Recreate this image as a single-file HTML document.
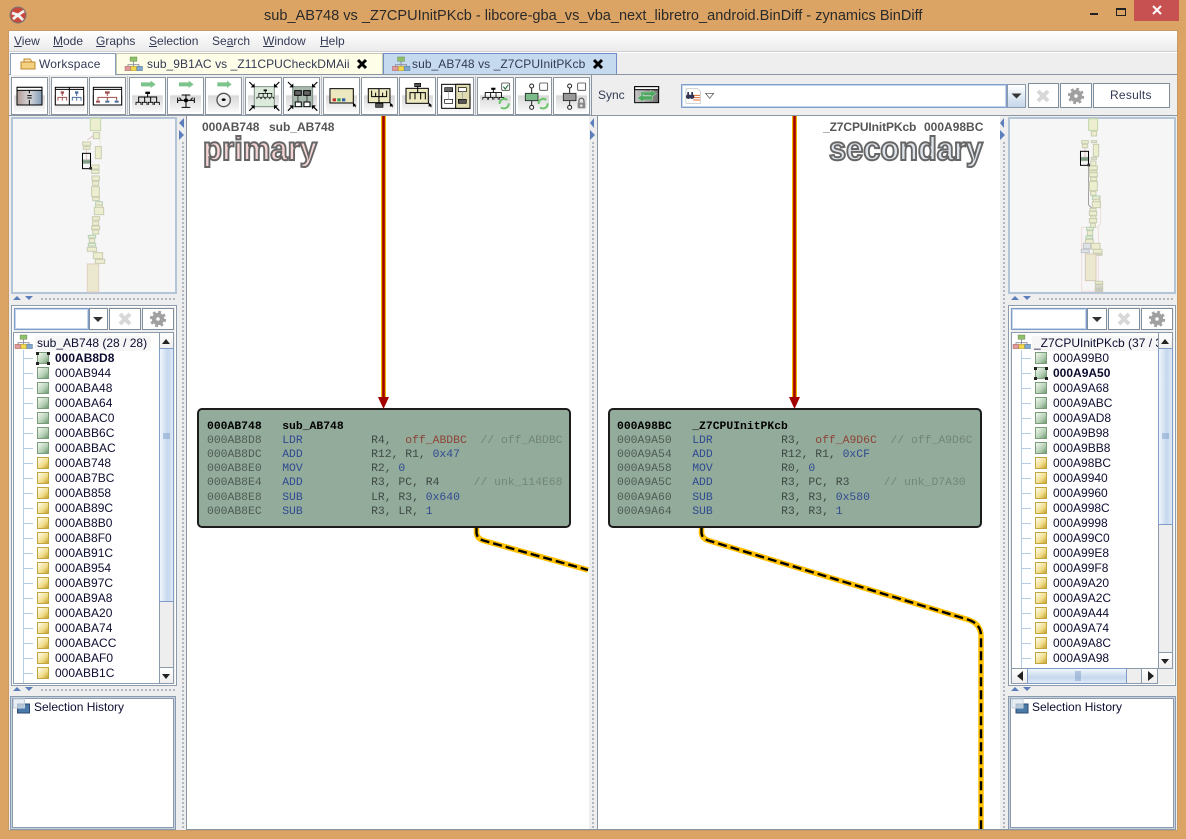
<!DOCTYPE html>
<html><head><meta charset="utf-8">
<style>
html,body{margin:0;padding:0}
body{width:1186px;height:839px;overflow:hidden;background:#dca464;position:relative;font:12px "Liberation Sans",sans-serif;color:#111}
.a{position:absolute;box-sizing:border-box}
.tx{position:absolute;white-space:pre;line-height:15px}
u{text-decoration:underline}
.menu{color:#333a55;font-size:12px;top:34px}
.btn{position:absolute;box-sizing:border-box;top:77px;width:37px;height:38px;border:1px solid #8a97a3;box-shadow:inset 0 0 0 2px #fff;background:linear-gradient(#fff 0,#fff 46%,#d9d9d9 50%,#f8f8f8 92%)}
.pb{position:absolute;box-sizing:border-box;border:1px solid #7f8e9c;background:#fff}
.panel{position:absolute;box-sizing:border-box;border:2px solid #b4c5d8;background:#f6f6f6}
.tree{position:absolute;font-size:12px;line-height:15px;color:#0c0c30;overflow:hidden}
.tree div{height:15px;padding-left:32px;position:relative;white-space:pre}
.tree div:before{content:"";position:absolute;left:14px;top:1px;width:10px;height:10px;border:1px solid #c0a63c;background:linear-gradient(135deg,#fffdf0,#f0dc88 60%,#c4a230)}
.tree div.g:before{border-color:#7a9c7a;background:linear-gradient(135deg,#f2f8f0,#b4cfb4 60%,#6e9a70)}
.tree div.s{font-weight:bold}
.tree div:after{content:"";position:absolute;left:0;top:7px;width:10px;border-top:1px solid #b5cde4}
.vl{position:absolute;width:1px;background:#b5cde4}
.sb{position:absolute;box-sizing:border-box;border:1px solid #8c9bab;background:#eee}
.th{position:absolute;box-sizing:border-box;border:1px solid #7f9dc8;background:linear-gradient(90deg,#f0f5fb,#c5d8ee 60%,#dfe9f5)}
.code{position:absolute;font:11.4px/14.2px "Liberation Mono",monospace;color:#3f4a45;white-space:pre;filter:blur(.3px)}
.code b{color:#000}.code i{font-style:normal;color:#2f4a90}.code em{font-style:normal;color:#8c4436}.code s{text-decoration:none;color:#4f5c55}.code q{quotes:none;color:#72867a}
.blk{position:absolute;box-sizing:border-box;background:#93ab9b;border:2px solid #1c1c1c;border-radius:5px;height:120px;top:408px}
.hd{position:absolute;font:bold 12px "Liberation Sans",sans-serif;color:#555;white-space:pre}
.dots{position:absolute;background-image:radial-gradient(circle at 2px 2px,#a3abb4 0.9px,transparent 1.1px);background-size:4px 4px}
</style></head><body>

<!-- window interior -->
<div class="a" style="left:8px;top:30px;width:1170px;height:801px;background:#eee;border:1px solid #c89a66"></div>
<div class="a" style="left:9px;top:31px;width:1168px;height:20px;background:linear-gradient(#fff,#ebebeb)"></div>
<div class="a" style="left:9px;top:51px;width:1168px;height:1px;background:#d0d0d0"></div>
<div class="a" style="left:9px;top:52px;width:1168px;height:1px;background:#fff"></div>

<!-- title -->
<div class="tx" style="left:264px;top:7px;font-size:14.55px;line-height:18px;color:#2a2a2a">sub_AB748 vs _Z7CPUInitPKcb - libcore-gba_vs_vba_next_libretro_android.BinDiff - zynamics BinDiff</div>
<div class="a" style="left:1134px;top:0;width:45px;height:21px;background:#c75050"></div>

<!-- menu -->
<div class="tx menu" style="left:14px"><u>V</u>iew</div>
<div class="tx menu" style="left:53px"><u>M</u>ode</div>
<div class="tx menu" style="left:96px"><u>G</u>raphs</div>
<div class="tx menu" style="left:149px"><u>S</u>election</div>
<div class="tx menu" style="left:212px">Se<u>a</u>rch</div>
<div class="tx menu" style="left:263px"><u>W</u>indow</div>
<div class="tx menu" style="left:320px"><u>H</u>elp</div>

<!-- tabs -->
<div class="a" style="left:9px;top:74px;width:1168px;height:1px;background:#8a97a3"></div>
<div class="a" style="left:10px;top:53px;width:106px;height:22px;background:#fff;border:1px solid #8aa0bc;border-bottom:0"></div>
<div class="a" style="left:116px;top:53px;width:267px;height:21px;background:#fdfde8;border:1px solid #c8c8b0;border-bottom:0"></div>
<div class="a" style="left:383px;top:53px;width:234px;height:21px;background:#c5d9ef;border:1px solid #6f8dc4;border-bottom:0"></div>
<div class="tx" style="left:39px;top:57px;color:#333a55;letter-spacing:.2px">Workspace</div>
<div class="tx" style="left:147px;top:57px;color:#333a55;letter-spacing:.07px">sub_9B1AC vs _Z11CPUCheckDMAii</div>
<div class="tx" style="left:412px;top:57px;color:#333a55;letter-spacing:.07px">sub_AB748 vs _Z7CPUInitPKcb</div>

<!-- toolbar buttons -->
<div class="btn" style="left:11px"></div><div class="btn" style="left:51px"></div><div class="btn" style="left:89px"></div>
<div class="btn" style="left:129px"></div><div class="btn" style="left:167px"></div><div class="btn" style="left:205px"></div>
<div class="btn" style="left:245px"></div><div class="btn" style="left:283px"></div>
<div class="btn" style="left:323px"></div><div class="btn" style="left:361px"></div><div class="btn" style="left:399px"></div><div class="btn" style="left:437px"></div>
<div class="btn" style="left:477px"></div><div class="btn" style="left:515px"></div><div class="btn" style="left:553px"></div>
<div class="a" style="left:49px;top:76px;width:1px;height:39px;background:#b8bec4"></div>
<div class="a" style="left:127px;top:76px;width:1px;height:39px;background:#b8bec4"></div>
<div class="a" style="left:243px;top:76px;width:1px;height:39px;background:#b8bec4"></div>
<div class="a" style="left:321px;top:76px;width:1px;height:39px;background:#b8bec4"></div>
<div class="a" style="left:475px;top:76px;width:1px;height:39px;background:#b8bec4"></div>
<div class="a" style="left:591px;top:75px;width:1px;height:40px;background:#8a97a3"></div>
<div class="tx" style="left:598px;top:88px;color:#333a55">Sync</div>

<!-- search row -->
<div class="a" style="left:681px;top:84px;width:326px;height:24px;background:#fff;border:1px solid #7f9dc8;box-shadow:inset 0 0 0 1px #c4d6ea"></div>
<div class="a" style="left:1007px;top:84px;width:19px;height:24px;background:linear-gradient(#fff,#c4d6ea);border:1px solid #8c9bab"></div>
<div class="pb" style="left:1028px;top:83px;width:31px;height:25px"></div>
<div class="pb" style="left:1060px;top:83px;width:32px;height:25px"></div>
<div class="pb" style="left:1093px;top:83px;width:77px;height:25px"></div>
<div class="tx" style="left:1110px;top:88px;color:#333a55;letter-spacing:.25px">Results</div>
<div class="a" style="left:9px;top:115px;width:1168px;height:1px;background:#8a97a3"></div>

<!-- graph areas -->
<div class="a" style="left:177px;top:116px;width:10px;height:714px;background:#eee"></div>
<div class="dots" style="left:181px;top:141px;width:4px;height:688px"></div>
<div class="a" style="left:186px;top:116px;width:1px;height:714px;background:#8a97a3"></div>
<div class="a" style="left:187px;top:116px;width:402px;height:714px;background:#fff"></div>
<div class="a" style="left:589px;top:116px;width:8px;height:714px;background:#eee"></div>
<div class="dots" style="left:591px;top:141px;width:4px;height:688px"></div>
<div class="a" style="left:597px;top:116px;width:1px;height:714px;background:#8a97a3"></div>
<div class="a" style="left:598px;top:116px;width:402px;height:714px;background:#fff"></div>
<div class="a" style="left:1000px;top:116px;width:8px;height:714px;background:#eee"></div>
<div class="dots" style="left:1002px;top:141px;width:4px;height:688px"></div>
<div class="a" style="left:187px;top:829px;width:821px;height:1px;background:#8a97a3"></div>

<div class="hd" style="left:202px;top:120px">000AB748</div>
<div class="hd" style="left:269px;top:120px">sub_AB748</div>
<div class="hd" style="left:823px;top:120px;letter-spacing:-.1px">_Z7CPUInitPKcb</div>
<div class="hd" style="left:924px;top:120px">000A98BC</div>

<!-- left panels -->
<div class="panel" style="left:11px;top:117px;width:166px;height:177px"></div>
<div class="dots" style="left:40px;top:297px;width:136px;height:4px"></div>
<div class="a" style="left:11px;top:305px;width:166px;height:381px;border:1px solid #8c9bab;background:#eee;box-shadow:inset 0 0 0 1px #fff"></div>
<div class="a" style="left:14px;top:308px;width:75px;height:22px;background:#fff;border:1px solid #7f9dc8;box-shadow:inset 0 0 0 1px #c4d6ea"></div>
<div class="pb" style="left:89px;top:308px;width:19px;height:22px"></div>
<div class="pb" style="left:109px;top:308px;width:32px;height:22px"></div>
<div class="pb" style="left:142px;top:308px;width:32px;height:22px"></div>
<div class="a" style="left:13px;top:332px;width:146px;height:352px;background:#fff;border:1px solid #8c9bab;border-right:0"></div>
<div class="sb" style="left:159px;top:332px;width:15px;height:352px"></div>
<div class="sb" style="left:159px;top:332px;width:15px;height:17px;background:linear-gradient(#fff,#eee)"></div>
<div class="th" style="left:159px;top:348px;width:15px;height:254px"></div>
<div class="sb" style="left:159px;top:667px;width:15px;height:17px;background:linear-gradient(#fff,#eee)"></div>
<div class="a" style="left:35px;top:336px;width:116px;height:15px;background:#f6f6f6"></div>
<div class="tx" style="left:37px;top:336px;color:#0c0c30">sub_AB748 (28 / 28)</div>
<div class="vl" style="left:23px;top:350px;height:333px"></div>
<div class="tree" style="left:23px;top:351px;width:135px;height:332px">
<div class="g s">000AB8D8</div><div class="g">000AB944</div><div class="g">000ABA48</div><div class="g">000ABA64</div><div class="g">000ABAC0</div><div class="g">000ABB6C</div><div class="g">000ABBAC</div><div>000AB748</div><div>000AB7BC</div><div>000AB858</div><div>000AB89C</div><div>000AB8B0</div><div>000AB8F0</div><div>000AB91C</div><div>000AB954</div><div>000AB97C</div><div>000AB9A8</div><div>000ABA20</div><div>000ABA74</div><div>000ABACC</div><div>000ABAF0</div><div>000ABB1C</div>
</div>
<div class="dots" style="left:40px;top:688px;width:136px;height:4px"></div>
<div class="a" style="left:10px;top:696px;width:166px;height:134px;background:#fff;border:1px solid #8c9bab;box-shadow:inset 0 0 0 1px #c4d3e4,inset 0 0 0 2px #8c9bab"></div>
<div class="tx" style="left:34px;top:700px;color:#0c0c30">Selection History</div>

<!-- right panels -->
<div class="panel" style="left:1008px;top:117px;width:168px;height:177px"></div>
<div class="dots" style="left:1038px;top:297px;width:136px;height:4px"></div>
<div class="a" style="left:1008px;top:305px;width:168px;height:381px;border:1px solid #8c9bab;background:#eee;box-shadow:inset 0 0 0 1px #fff"></div>
<div class="a" style="left:1011px;top:308px;width:76px;height:22px;background:#fff;border:1px solid #7f9dc8;box-shadow:inset 0 0 0 1px #c4d6ea"></div>
<div class="pb" style="left:1087px;top:308px;width:20px;height:22px"></div>
<div class="pb" style="left:1108px;top:308px;width:32px;height:22px"></div>
<div class="pb" style="left:1141px;top:308px;width:32px;height:22px"></div>
<div class="a" style="left:1011px;top:332px;width:147px;height:337px;background:#fff;border:1px solid #8c9bab;border-right:0;border-bottom:0"></div>
<div class="vl" style="left:1021px;top:350px;height:318px"></div>
<div class="tree" style="left:1021px;top:351px;width:137px;height:317px">
<div class="g">000A99B0</div><div class="g s">000A9A50</div><div class="g">000A9A68</div><div class="g">000A9ABC</div><div class="g">000A9AD8</div><div class="g">000A9B98</div><div class="g">000A9BB8</div><div>000A98BC</div><div>000A9940</div><div>000A9960</div><div>000A998C</div><div>000A9998</div><div>000A99C0</div><div>000A99E8</div><div>000A99F8</div><div>000A9A20</div><div>000A9A2C</div><div>000A9A44</div><div>000A9A74</div><div>000A9A8C</div><div>000A9A98</div>
</div>
<div class="a" style="left:1032px;top:336px;width:126px;height:15px;background:#f6f6f6"></div>
<div class="tx" style="left:1034px;top:336px;width:124px;overflow:hidden;color:#0c0c30">_Z7CPUInitPKcb (37 / 37)</div>
<div class="sb" style="left:1158px;top:332px;width:15px;height:337px"></div>
<div class="sb" style="left:1158px;top:332px;width:15px;height:17px;background:linear-gradient(#fff,#eee)"></div>
<div class="th" style="left:1158px;top:348px;width:15px;height:177px"></div>
<div class="sb" style="left:1158px;top:652px;width:15px;height:17px;background:linear-gradient(#fff,#eee)"></div>
<div class="sb" style="left:1011px;top:668px;width:147px;height:16px"></div>
<div class="sb" style="left:1011px;top:668px;width:17px;height:16px;background:linear-gradient(#fff,#eee)"></div>
<div class="th" style="left:1027px;top:668px;width:100px;height:16px;background:linear-gradient(#f0f5fb,#c5d8ee 60%,#dfe9f5)"></div>
<div class="sb" style="left:1141px;top:668px;width:17px;height:16px;background:linear-gradient(#fff,#eee)"></div>
<div class="a" style="left:1008px;top:696px;width:168px;height:134px;background:#fff;border:1px solid #8c9bab;box-shadow:inset 0 0 0 1px #c4d3e4,inset 0 0 0 2px #8c9bab"></div>
<div class="tx" style="left:1032px;top:700px;color:#0c0c30">Selection History</div>

<!-- code blocks -->
<div class="blk" style="left:197px;width:374px"></div>
<div class="blk" style="left:608px;width:374px"></div>
<div class="code" style="left:207px;top:419.500px"><b>000AB748   sub_AB748</b>
<s>000AB8D8</s>   <i>LDR</i>          R4,  <em>off_ABDBC</em>  <q>// off_ABDBC</q>
<s>000AB8DC</s>   <i>ADD</i>          R12, R1, <i>0x47</i>
<s>000AB8E0</s>   <i>MOV</i>          R2, <i>0</i>
<s>000AB8E4</s>   <i>ADD</i>          R3, PC, R4     <q>// unk_114E68</q>
<s>000AB8E8</s>   <i>SUB</i>          LR, R3, <i>0x640</i>
<s>000AB8EC</s>   <i>SUB</i>          R3, LR, <i>1</i></div>
<div class="code" style="left:617px;top:419.500px"><b>000A98BC   _Z7CPUInitPKcb</b>
<s>000A9A50</s>   <i>LDR</i>          R3,  <em>off_A9D6C</em>  <q>// off_A9D6C</q>
<s>000A9A54</s>   <i>ADD</i>          R12, R1, <i>0xCF</i>
<s>000A9A58</s>   <i>MOV</i>          R0, <i>0</i>
<s>000A9A5C</s>   <i>ADD</i>          R3, PC, R3     <q>// unk_D7A30</q>
<s>000A9A60</s>   <i>SUB</i>          R3, R3, <i>0x580</i>
<s>000A9A64</s>   <i>SUB</i>          R3, R3, <i>1</i></div>

<svg class="a" style="left:0;top:0" width="1186" height="839" viewBox="0 0 1186 839" xmlns="http://www.w3.org/2000/svg">
<defs>
<linearGradient id="gw" x1="0" y1="0" x2="1" y2="0"><stop offset="0" stop-color="#b09a98"/><stop offset=".5" stop-color="#d8d8d8"/><stop offset="1" stop-color="#7f9ab5"/></linearGradient>
<linearGradient id="gs" x1="0" y1="0" x2="1" y2="0"><stop offset="0" stop-color="#c8c8c8"/><stop offset="1" stop-color="#6e6e6e"/></linearGradient>
<g id="ttree"><g transform="scale(.85)"><rect x="-4" y="0" width="8" height="5" fill="#8ec06a" stroke="#6a8a50" stroke-width=".6"/><path d="M0 5V9M-6.500 12V9H6.500V12M0 9V12" stroke="#889" stroke-width="1" fill="none"/><rect x="-10" y="11" width="6.500" height="5" fill="#e09a9a" stroke="#a66" stroke-width=".6"/><rect x="-3" y="11" width="6.500" height="5" fill="#f2d84c" stroke="#b09a30" stroke-width=".6"/><rect x="4" y="11" width="6.500" height="5" fill="#7fa8cc" stroke="#5a7a9a" stroke-width=".6"/></g></g>
<g id="x"><path d="M-4-4L4 4M4-4L-4 4" stroke="#000" stroke-width="3"/></g>
<g id="grayx"><path d="M-5-5L5 5M5-5L-5 5" stroke="#d8d8d8" stroke-width="4"/></g>
<g id="gear"><circle r="4" fill="none" stroke="#a0a0a0" stroke-width="4.500"/><circle r="7" fill="none" stroke="#a0a0a0" stroke-width="2.400" stroke-dasharray="2.800 2.700"/></g>
<path id="hs" d="M0 0L10 0L5 5Z" fill="#333"/>
<g id="stk"><rect x="5" y="7" width="12" height="9" fill="#4a7aa8" stroke="#2e4a70"/><rect x="1" y="2" width="11" height="9" fill="#dfe7f0" fill-opacity=".7" stroke="#c4d0dc"/></g>
<g id="hg" fill="none" stroke="#000" stroke-width="3"><rect x="-7" y="-2" width="14" height="7" fill="#000" stroke="none"/><path d="M0 4V14M-27 30V14H27V30M-9 14V30M9 14V30"/><path d="M-35 38V30H-20V38M-16 38V30H-2V38M2 38V30H16V38M20 38V30H35V38" stroke-width="2.500"/></g>
<g id="cur"><path d="M0 0L0 10L3 7.500L5 11L7 10L5 6.500L8.500 6.500Z" fill="#000"/></g>
<g id="inarrow"><path d="M0 0L12 12" stroke="#000" stroke-width="3.500" fill="none"/><path d="M16 16H4L16 4Z" fill="#000"/></g>
</defs>

<!-- title icon -->
<circle cx="18" cy="15" r="8" fill="#c8483c" stroke="#777" stroke-width="1"/>
<path d="M12 13L18 15L24 11M13 19L18 15L23 20" stroke="#f2f2f2" stroke-width="2.800" fill="none"/>
<!-- window controls -->
<rect x="1090" y="13" width="8" height="2" fill="#222"/>
<rect x="1116.500" y="8.500" width="9" height="7" fill="none" stroke="#222"/><rect x="1116" y="8" width="10" height="2" fill="#222"/>
<path d="M1153 6L1161 14M1161 6L1153 14" stroke="#fff" stroke-width="2"/>

<!-- tabs icons -->
<path d="M21 62H35V69H21Z" fill="#f3cf80" stroke="#c08a30"/><path d="M24 59H30L32 62H24Z" fill="#f9e3b0" stroke="#c08a30"/>
<use href="#ttree" x="133.500" y="57"/><use href="#ttree" x="401" y="57"/>
<use href="#x" x="362" y="64"/><use href="#x" x="598" y="64"/>

<!-- toolbar icons: zoom 1 coords -->
<g transform="scale(.3333)">
<rect x="51" y="262" width="75" height="53" fill="url(#gw)" stroke="#000" stroke-width="3"/><rect x="51" y="262" width="75" height="9" fill="#fff" stroke="#000" stroke-width="3"/><path d="M88 271V280M88 300V315" stroke="#000" stroke-width="3"/><path d="M82 287H95M82 294H95" stroke="#000" stroke-width="3"/>
<rect x="166" y="262" width="85" height="53" fill="#fff" stroke="#000" stroke-width="3"/><path d="M166 268H251M208 262V315" stroke="#000" stroke-width="3"/>
<path d="M187 280V288M174 302V292H200V302M187 292V302" stroke="#a05050" stroke-width="3" fill="none"/><rect x="182" y="274" width="10" height="7" fill="#a05050"/>
<path d="M230 280V288M217 302V292H243V302M230 292V302" stroke="#4a6e9c" stroke-width="3" fill="none"/><rect x="225" y="274" width="10" height="7" fill="#4a6e9c"/>
<rect x="280" y="262" width="85" height="53" fill="#fff" stroke="#000" stroke-width="3"/><path d="M280 268H365" stroke="#000" stroke-width="3"/>
<path d="M322 280V288M294 302V292H350V302M322 292V302" stroke="#a05050" stroke-width="3" fill="none"/><rect x="315" y="274" width="14" height="7" fill="#a05050"/><rect x="288" y="302" width="12" height="6" fill="#a05050"/><rect x="344" y="302" width="12" height="6" fill="#4a6e9c"/><rect x="316" y="302" width="12" height="6" fill="#4a6e9c"/>
<g fill="#7cc48c"><path d="M423 247H452V242L467 253L452 264V259H423Z"/><path d="M537 247H566V242L581 253L566 264V259H537Z"/><path d="M652 247H681V242L695 253L681 264V259H652Z"/></g>
<use href="#hg" transform="translate(443,277)"/>
<g stroke="#000" stroke-width="3" fill="none"><path d="M533 301H583M558 285V322M545 285H571M545 322H571M533 293V309M583 293V309M545 301L538 293M571 301L578 293"/></g><circle cx="558" cy="301" r="6"/>
<circle cx="671" cy="300" r="20" fill="#eee" stroke="#555" stroke-width="4"/><ellipse cx="671" cy="299" rx="6" ry="4"/>
<rect x="763" y="260" width="60" height="60" fill="#dceadc" stroke="#7f8f85" stroke-width="3"/><use href="#hg" transform="translate(796,270) scale(.72)"/>
<use href="#inarrow" transform="translate(748,246)"/><use href="#inarrow" transform="translate(838,246) scale(-1,1)"/><use href="#inarrow" transform="translate(748,332) scale(1,-1)"/><use href="#inarrow" transform="translate(838,332) scale(-1,-1)"/>
<rect x="878" y="260" width="60" height="60" fill="#a9b8ad" stroke="#7f8f85" stroke-width="3"/>
<rect x="884" y="272" width="20" height="14" fill="#666" stroke="#000" stroke-width="3"/><rect x="911" y="272" width="20" height="14" fill="#666" stroke="#000" stroke-width="3"/>
<path d="M894 286V305M921 286V305" stroke="#000" stroke-width="2"/><rect x="886" y="306" width="18" height="14" fill="#fff" stroke="#000" stroke-width="3"/><rect x="912" y="306" width="18" height="14" fill="#fff" stroke="#000" stroke-width="3"/>
<use href="#inarrow" transform="translate(864,246)"/><use href="#inarrow" transform="translate(952,246) scale(-1,1)"/><use href="#inarrow" transform="translate(864,332) scale(1,-1)"/><use href="#inarrow" transform="translate(952,332) scale(-1,-1)"/>
<rect x="990" y="266" width="70" height="43" fill="#ece8c0" stroke="#000" stroke-width="3"/><rect x="998" y="295" width="10" height="9" fill="#c03030"/><rect x="1012" y="295" width="10" height="9" fill="#30a050"/><rect x="1026" y="295" width="10" height="9" fill="#3060b0"/>
<use href="#cur" transform="translate(1059,308) scale(1.300)"/>
<rect x="1105" y="266" width="65" height="42" fill="#ece8c0" stroke="#000" stroke-width="3"/><path d="M1137 266V308M1115 272V290H1160V272M1127 278V290M1148 278V290" stroke="#000" stroke-width="3" fill="none"/><rect x="1127" y="310" width="22" height="12" fill="#555" stroke="#000" stroke-width="2"/>
<use href="#cur" transform="translate(1170,308) scale(1.300)"/>
</g>
<!-- toolbar icons: zoom 2 coords -->
<g transform="translate(400,40) scale(.3333)">
<rect x="18" y="145" width="67" height="45" fill="#ece8c0" stroke="#000" stroke-width="3"/><rect x="44" y="130" width="18" height="10" fill="#555" stroke="#000" stroke-width="2"/><path d="M53 140V158M30 178V158H76V178M45 158V178M62 158V178" stroke="#000" stroke-width="3" fill="none"/>
<use href="#cur" transform="translate(86,188) scale(1.300)"/>
<rect x="125" y="133" width="85" height="72" fill="#fff" stroke="#000" stroke-width="3"/><rect x="167" y="133" width="43" height="72" fill="#dedcb0" stroke="#000" stroke-width="3"/>
<rect x="134" y="143" width="24" height="12" fill="#666" stroke="#000" stroke-width="2"/><rect x="134" y="178" width="24" height="12" fill="#fff" stroke="#000" stroke-width="2"/><path d="M146 155V178" stroke="#999" stroke-width="2"/>
<rect x="175" y="143" width="24" height="12" fill="#fff" stroke="#000" stroke-width="2"/><rect x="175" y="178" width="24" height="12" fill="#555" stroke="#000" stroke-width="2"/><path d="M187 155V178" stroke="#999" stroke-width="2"/>
<use href="#hg" transform="translate(280,145) scale(.9)"/>
<rect x="305" y="129" width="24" height="22" rx="3" fill="#fff" stroke="#444" stroke-width="2.500"/><path d="M310 140L316 147L325 134" stroke="#2e7a4a" stroke-width="3.500" fill="none"/>
<g id="rf" fill="none" stroke="#6ac46a" stroke-width="6"><path d="M299 192A14 14 0 0 1 322 180"/><path d="M326 190A14 14 0 0 1 303 202"/></g>
<circle cx="395" cy="138" r="6" fill="#fff" stroke="#222" stroke-width="3"/><path d="M395 144V160M395 182V196" stroke="#222" stroke-width="3"/><rect x="376" y="160" width="38" height="22" fill="#7cbc8c" stroke="#222" stroke-width="2.500"/><circle cx="395" cy="202" r="6" fill="#fff" stroke="#222" stroke-width="3"/>
<rect x="419" y="129" width="24" height="22" rx="3" fill="#fff" stroke="#444" stroke-width="2.500"/>
<use href="#rf" x="117"/>
<circle cx="509" cy="138" r="6" fill="#fff" stroke="#222" stroke-width="3"/><path d="M509 144V160M509 182V196" stroke="#222" stroke-width="3"/><rect x="490" y="160" width="38" height="22" fill="#999" stroke="#222" stroke-width="2.500"/><circle cx="509" cy="202" r="6" fill="#fff" stroke="#222" stroke-width="3"/>
<rect x="533" y="129" width="24" height="22" rx="3" fill="#fff" stroke="#444" stroke-width="2.500"/>
<rect x="533" y="188" width="23" height="17" fill="#888"/><path d="M537 188V182A7 7 0 0 1 552 182V188" stroke="#444" stroke-width="3" fill="none"/><rect x="541" y="194" width="6" height="6" fill="#fff"/>
<rect x="704" y="140" width="72" height="48" fill="url(#gs)" stroke="#000" stroke-width="3"/><rect x="704" y="140" width="72" height="9" fill="#fff" stroke="#000" stroke-width="3"/>
<path d="M722 156H752V150L770 161L752 172V166H722Z" fill="#4fa860" stroke="#e8f0e8" stroke-width="1"/><path d="M758 168H730V162L712 174L730 186V180H758Z" fill="#4fa860" stroke="#e8f0e8" stroke-width="1"/>
<path d="M858 146H893L902 155V190H858Z" fill="#fff" stroke="#bbb" stroke-width="2"/><path d="M880 166H900M880 173H900M880 180H900" stroke="#e06a30" stroke-width="3"/><circle cx="865" cy="170" r="7" fill="#335"/><circle cx="876" cy="170" r="7" fill="#335"/><rect x="862" y="156" width="5" height="10" fill="#335"/><rect x="874" y="156" width="5" height="10" fill="#335"/>
<path d="M917 160H941L929 175Z" fill="#fff" stroke="#444" stroke-width="2"/>
</g>
<use href="#hs" x="1011.500" y="93.500"/>
<use href="#grayx" x="1043" y="96"/><use href="#gear" x="1076" y="96"/>

<!-- splitter arrows -->
<g fill="#5c7fbc"><path d="M184 118L179 123L184 128Z"/><path d="M179 130L184 135L179 140Z"/><path d="M594 118L590 123L594 128Z"/><path d="M590 130L595 135L590 140Z"/><path d="M1004 118L1000 123L1004 128Z"/><path d="M1000 130L1005 135L1000 140Z"/>
<path d="M13 300L21 300L17 296Z"/><path d="M25 296L33 296L29 300Z"/><path d="M13 691L21 691L17 687Z"/><path d="M25 687L33 687L29 691Z"/>
<path d="M1011 300L1019 300L1015 296Z"/><path d="M1023 296L1031 296L1027 300Z"/><path d="M1011 691L1019 691L1015 687Z"/><path d="M1023 687L1031 687L1027 691Z"/></g>

<!-- combos left/right -->
<use href="#hs" x="93" y="317"/><use href="#hs" x="1092" y="317"/>
<use href="#grayx" x="125" y="319"/><use href="#gear" x="158" y="319"/>
<use href="#grayx" x="1124" y="319"/><use href="#gear" x="1157" y="319"/>
<g fill="#222"><path d="M162 344L170 344L166 339Z"/><path d="M162 674L170 674L166 679Z"/><path d="M1161 344L1169 344L1165 339Z"/><path d="M1161 659L1169 659L1165 664Z"/><path d="M1023 671V681L1017 676Z"/><path d="M1148 671V681L1154 676Z"/></g>
<path d="M163 434H170M163 436H170M163 438H170M1162 434H1169M1162 436H1169M1162 438H1169" stroke="#7f9dc8" stroke-width="1"/>
<path d="M1076 671V681M1078 671V681M1080 671V681" stroke="#7f9dc8"/>
<use href="#ttree" x="23.500" y="335"/><use href="#ttree" x="1021.500" y="335"/>
<g fill="#222"><rect x="36" y="352" width="3" height="3"/><rect x="47" y="352" width="3" height="3"/><rect x="36" y="362" width="3" height="3"/><rect x="47" y="362" width="3" height="3"/>
<rect x="1034" y="367" width="3" height="3"/><rect x="1045" y="367" width="3" height="3"/><rect x="1034" y="377" width="3" height="3"/><rect x="1045" y="377" width="3" height="3"/></g>
<use href="#stk" x="12.500" y="697"/><use href="#stk" x="1011" y="697"/>

<!-- edges -->
<g fill="none">
<path d="M383.500 116V398" stroke="#f2b800" stroke-width="5"/><path d="M383.500 116V398" stroke="#a30000" stroke-width="2.600"/>
<path d="M794.500 116V398" stroke="#f2b800" stroke-width="5"/><path d="M794.500 116V398" stroke="#a30000" stroke-width="2.600"/>
<path d="M476.500 528V533Q477 539 485 541L588 570" stroke="#ffc000" stroke-width="5.500"/>
<path d="M476.500 528V533Q477 539 485 541L588 570" stroke="#000" stroke-width="2.400" stroke-dasharray="9 4"/>
<path d="M701.500 528V533Q702 539 710 541L966 619Q981 623 981 636V829" stroke="#ffc000" stroke-width="5.500"/>
<path d="M701.500 528V533Q702 539 710 541L966 619Q981 623 981 636V829" stroke="#000" stroke-width="2.400" stroke-dasharray="9 4"/>
</g>
<path d="M378 397H389L383.500 409Z" fill="#a30000"/><path d="M789 397H800L794.500 409Z" fill="#a30000"/>

<!-- big labels -->
<text x="203" y="160" font-family="Liberation Sans" font-weight="bold" font-size="33" textLength="114" lengthAdjust="spacingAndGlyphs" fill="#f5d5d5" stroke="#666" stroke-width="2" >primary</text>
<text x="829" y="160" font-family="Liberation Sans" font-weight="bold" font-size="33" textLength="154" lengthAdjust="spacingAndGlyphs" fill="#dfe5ec" stroke="#666" stroke-width="2">secondary</text>

<!-- left minimap -->
<g transform="translate(0,110) scale(.3333)" fill="#eceecf" stroke="#c9ccb0" stroke-width="3">
<path d="M260 100V150M290 70L262 90" stroke="#e0b0b0" stroke-width="2" fill="none"/>
<path d="M300 60V110" stroke="#e8eadb" fill="none"/>
<rect x="271" y="25" width="31" height="37" stroke="#c0d8a8"/><rect x="280" y="68" width="18" height="18"/><rect x="248" y="96" width="24" height="10"/><rect x="250" y="110" width="20" height="8"/><rect x="286" y="110" width="18" height="36"/><rect x="248" y="150" width="24" height="10" fill="#7f9c85" stroke="#9fb09f"/><rect x="275" y="165" width="22" height="12"/><rect x="275" y="180" width="22" height="10"/><rect x="276" y="198" width="22" height="14"/><rect x="278" y="214" width="18" height="12"/><rect x="275" y="230" width="23" height="30"/><rect x="278" y="262" width="20" height="10"/><rect x="287" y="275" width="20" height="10" stroke="#b0d0b8"/><rect x="287" y="285" width="20" height="8"/><rect x="283" y="292" width="28" height="22"/><rect x="277" y="320" width="22" height="10"/><rect x="278" y="334" width="18" height="12"/><rect x="275" y="348" width="24" height="10"/><rect x="278" y="360" width="18" height="12"/><rect x="265" y="376" width="22" height="8" stroke="#b0d0b8"/><rect x="268" y="386" width="16" height="12"/><rect x="265" y="400" width="22" height="8" stroke="#b0d0b8"/><rect x="262" y="412" width="28" height="12"/><rect x="280" y="428" width="28" height="18"/><rect x="286" y="448" width="28" height="12"/><rect x="262" y="462" width="34" height="84" fill="#ece8d0" stroke="#e0d0c0"/>
<rect x="247.500" y="130" width="24" height="46" fill="none" stroke="#000" stroke-width="3"/><rect x="268" y="171" width="8" height="8" fill="#333" stroke="none"/>
</g>
<!-- right minimap -->
<g transform="translate(990,110) scale(.3333)" fill="#eceecf" stroke="#c9ccb0" stroke-width="3">
<rect x="275" y="352" width="50" height="192" fill="none" stroke="#f0dcdc"/><path d="M325 258H332V340L325 350" fill="none" stroke="#f0dcdc"/>
<path d="M285 113V142" stroke="#e0b0b0" stroke-width="2" fill="none"/>
<path d="M296 165V285L308 297" stroke="#777" stroke-width="2" fill="none"/>
<rect x="296" y="26" width="27" height="35" stroke="#c0d8a8"/><rect x="304" y="64" width="16" height="14"/><rect x="275" y="92" width="20" height="8"/><rect x="277" y="103" width="16" height="10"/><rect x="304" y="92" width="16" height="6" fill="#e0e4e8"/><rect x="310" y="103" width="16" height="36"/><rect x="304" y="142" width="16" height="6" fill="#e0e4e8"/><rect x="272" y="142" width="24" height="10" fill="#7f9c85" stroke="#9fb09f"/><rect x="302" y="153" width="16" height="14"/><rect x="298" y="168" width="24" height="12"/><rect x="300" y="182" width="20" height="10"/><rect x="298" y="188" width="24" height="12"/><rect x="302" y="202" width="18" height="10"/><rect x="298" y="214" width="24" height="28"/><rect x="302" y="244" width="16" height="12"/><rect x="307" y="258" width="22" height="10" stroke="#b0d0b8"/><rect x="310" y="268" width="18" height="8"/><rect x="307" y="275" width="24" height="18"/><rect x="300" y="295" width="18" height="8"/><rect x="298" y="304" width="22" height="12"/><rect x="302" y="318" width="16" height="8"/><rect x="298" y="326" width="22" height="12"/><rect x="302" y="340" width="14" height="12"/><rect x="290" y="352" width="20" height="8" stroke="#b0d0b8"/><rect x="292" y="362" width="16" height="14"/><rect x="288" y="378" width="20" height="8" stroke="#b0d0b8"/><rect x="286" y="388" width="24" height="12"/><rect x="280" y="400" width="22" height="16" fill="#dfe3e6" stroke="#c0c4c8"/><rect x="274" y="418" width="24" height="10" fill="#dfe3e6" stroke="#c0c4c8"/><rect x="304" y="400" width="26" height="18"/><rect x="310" y="418" width="26" height="12"/><rect x="312" y="430" width="24" height="6" fill="#cfd3c8"/><rect x="286" y="432" width="32" height="80" fill="#ece8d0" stroke="#d8c8b8"/><rect x="316" y="514" width="22" height="8"/><rect x="316" y="524" width="22" height="10" fill="#d8d8d0"/><rect x="316" y="535" width="22" height="10" fill="#c8c8c4"/>
<rect x="271.500" y="124" width="24" height="42" fill="none" stroke="#000" stroke-width="3"/><rect x="292" y="161" width="8" height="8" fill="#333" stroke="none"/>
</g>
</svg>
</body></html>
